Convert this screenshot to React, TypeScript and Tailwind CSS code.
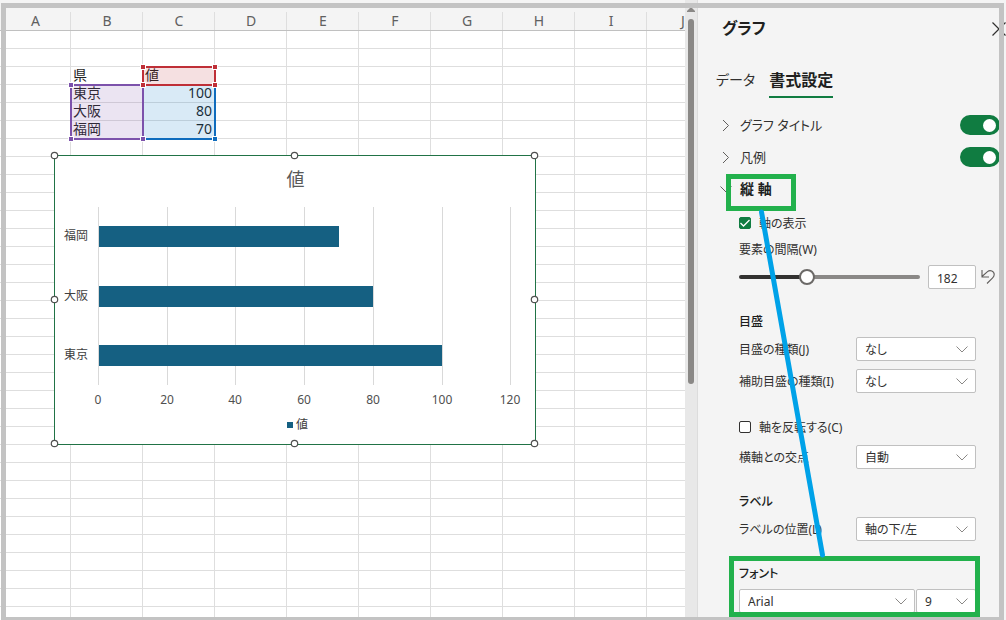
import { useState, type ReactNode } from 'react';

const COLUMNS = ['A', 'B', 'C', 'D', 'E', 'F', 'G', 'H', 'I', 'J'];
const ROWS = Array.from({ length: 34 }, (_, i) => i + 1);
const CELLS: Record<string, string> = {
  B3: '県',
  C3: '値',
  B4: '東京',
  C4: '100',
  B5: '大阪',
  C5: '80',
  B6: '福岡',
  C6: '70',
};

const BARS = [
  { label: '福岡', y: 226, end: 339 },
  { label: '大阪', y: 286, end: 373 },
  { label: '東京', y: 345, end: 442 },
];
const TICKS = [
  { value: 0, x: 98 },
  { value: 20, x: 167 },
  { value: 40, x: 235 },
  { value: 60, x: 304 },
  { value: 80, x: 373 },
  { value: 100, x: 442 },
  { value: 120, x: 510 },
];
const HANDLES = [
  [54.5, 155.5], [294.5, 155.5], [534.5, 155.5],
  [54.5, 299.5], [534.5, 299.5],
  [54.5, 443.5], [294.5, 443.5], [534.5, 443.5],
];

function RangeBox({ place, line, handle }: { place: string; line: string; handle: string }) {
  const corners = ['-left-1 -top-1', '-right-1 -top-1', '-left-1 -bottom-1', '-right-1 -bottom-1'];
  return (
    <div className={`pointer-events-none absolute border-2 ${place} ${line}`}>
      {corners.map((c) => (
        <span key={c} className={`absolute size-[6px] border border-white ${c} ${handle}`} />
      ))}
    </div>
  );
}

function Chart() {
  return (
    <svg
      className="absolute left-12 top-[149px] h-[302px] w-[494px]"
      viewBox="48 149 494 302"
      role="img"
      aria-label="値"
    >
      <rect x="54.5" y="155.5" width="481" height="289" fill="#fff" stroke="#217346" />
      <text x="295.5" y="186" textAnchor="middle" fontSize="18" fill="#595959">値</text>
      {TICKS.map((t) => (
        <g key={t.value}>
          <rect x={t.x} y="207" width="1" height="178" fill="#d9d9d9" />
          <text x={t.x} y="404" textAnchor="middle" fontSize="12" fill="#505050">{t.value}</text>
        </g>
      ))}
      {BARS.map((b) => (
        <g key={b.label}>
          <rect x="99" y={b.y} width={b.end - 99} height="21" fill="#156082" />
          <text x="88" y={b.y + 14} textAnchor="end" fontSize="12" fill="#404040">{b.label}</text>
        </g>
      ))}
      <rect x="287" y="422" width="6" height="6" fill="#156082" />
      <text x="296" y="429" fontSize="12" fill="#404040">値</text>
      {HANDLES.map(([x, y]) => (
        <circle key={`${x}-${y}`} cx={x} cy={y} r="3.2" fill="#fff" stroke="#505050" strokeWidth="1.2" />
      ))}
    </svg>
  );
}

function Sheet() {
  return (
    <main className="relative min-w-0 flex-1 overflow-hidden bg-white">
      <table className="w-[719px] table-fixed border-separate border-spacing-0 text-sm text-[#1f1f1f]">
        <colgroup>
          {COLUMNS.map((c) => (
            <col key={c} className={c === 'A' ? 'w-[71px]' : 'w-[72px]'} />
          ))}
        </colgroup>
        <thead>
          <tr>
            {COLUMNS.map((c) => (
              <th key={c} className="border-b border-[#c0c0c0] bg-[#f4f4f4] p-0 pt-3 font-normal text-[#606060]">
                <div className="h-[18px] border-r border-[#dedede] pl-px leading-[18px]">{c}</div>
              </th>
            ))}
          </tr>
        </thead>
        <tbody>
          {ROWS.map((r) => (
            <tr key={r}>
              {COLUMNS.map((c) => {
                const text = CELLS[c + r];
                const numeric = text !== undefined && /^\d+$/.test(text);
                return (
                  <td
                    key={c}
                    className={`h-[18px] border-r border-b border-[#dedede] px-[2px] py-0 align-top leading-[15px] ${numeric ? 'text-right' : 'text-left'}`}
                  >
                    {text}
                  </td>
                );
              })}
            </tr>
          ))}
        </tbody>
      </table>
      <RangeBox place="left-[142px] top-[84px] h-14 w-[74px]" line="border-[#0f6cbd] bg-[#0070c0]/15" handle="bg-[#0f6cbd]" />
      <RangeBox place="left-[70px] top-[84px] h-14 w-[74px]" line="border-[#7c52ab] bg-[#8055af]/16" handle="bg-[#7c52ab]" />
      <RangeBox place="left-[142px] top-[66px] h-5 w-[74px]" line="border-[#bf2f37] bg-[#bf2c33]/15" handle="bg-[#bf2f37]" />
      <Chart />
    </main>
  );
}

function Scrollbar() {
  return (
    <div className="flex w-3 shrink-0 flex-col items-center bg-[#e8e8e8] pt-2">
      <svg className="h-1 w-2" viewBox="0 0 8 4" aria-hidden="true">
        <path d="M0 4V3L3 0H5L8 3V4Z" fill="#8a8886" />
      </svg>
      <div className="mt-[7px] h-[365px] w-[6px] rounded-full bg-[#8a8886]" />
    </div>
  );
}

function Chevron({ className }: { className: string }) {
  return (
    <svg className={`h-[7px] w-3 ${className}`} viewBox="0 0 12 7" fill="none" stroke="currentColor" aria-hidden="true">
      <path d="M0.5 0.5L6 6L11.5 0.5" />
    </svg>
  );
}

function Section({ title, toggle }: { title: string; toggle?: boolean }) {
  return (
    <div className="flex h-8 items-center justify-between pl-[22px] pr-[6px]">
      <button type="button" aria-expanded={!toggle} className={`flex items-center leading-5 ${toggle ? 'text-[13px] text-[#323130]' : 'text-sm font-semibold text-[#201f1e]'}`}>
        <Chevron className={`mr-2 text-[#605e5c] ${toggle ? '-rotate-90' : ''}`} />
        {title}
      </button>
      {toggle && (
        <input
          type="checkbox"
          role="switch"
          aria-label={title}
          defaultChecked
          className="flex h-5 w-10 appearance-none items-center justify-start rounded-full bg-[#8a8886] px-1 before:size-[13px] before:rounded-full before:bg-white checked:justify-end checked:bg-[#107c41]"
        />
      )}
    </div>
  );
}

function Check({ label, checked, className }: { label: string; checked?: boolean; className: string }) {
  return (
    <label className={`flex h-[18px] items-center gap-2 ${className}`}>
      <span className="relative flex size-3">
        <input
          type="checkbox"
          defaultChecked={checked}
          className="peer size-3 appearance-none rounded-xs border border-[#323130] bg-white checked:border-[#107c41] checked:bg-[#107c41]"
        />
        <svg className="pointer-events-none absolute inset-0 hidden size-3 peer-checked:block" viewBox="0 0 12 12" fill="none" stroke="#fff" strokeWidth="1.3" aria-hidden="true">
          <path d="M1.5 6L4.5 9L10.5 3" />
        </svg>
      </span>
      <span className="pt-[2px]">{label}</span>
    </label>
  );
}

function Select({ id, label, value, className }: { id: string; label?: string; value: string; className: string }) {
  return (
    <div className={`relative h-6 ${className}`}>
      <select id={id} aria-label={label} className="h-6 w-full appearance-none rounded-xs border border-[#c0c0c0] bg-white px-2 pt-[2px] leading-5">
        <option>{value}</option>
      </select>
      <Chevron className="pointer-events-none absolute right-2 top-[9px] text-[#8a8886]" />
    </div>
  );
}

function Field({ id, label, value, className }: { id: string; label: string; value: string; className: string }) {
  return (
    <div className={`flex items-center justify-between ${className}`}>
      <label htmlFor={id} className="pt-[2px]">{label}</label>
      <Select id={id} value={value} className="w-[120px]" />
    </div>
  );
}

function Heading({ children }: { children: ReactNode }) {
  return <h3 className="mt-6 mb-[6px] leading-[18px] font-medium text-[#201f1e]">{children}</h3>;
}

function Panel() {
  const [gap, setGap] = useState(182);
  return (
    <aside className="relative w-[309px] shrink-0 border-l border-[#dcdcdc] bg-[#f4f4f4] pt-[18px] text-[#323130] [font-feature-settings:'palt']">
      <header className="flex h-5 items-center justify-between pl-6">
        <h2 className="text-base leading-5 font-bold text-[#201f1e]">グラフ</h2>
        <button type="button" aria-label="閉じる" className="pt-[2px]">
          <svg className="size-[14px]" viewBox="0 0 14 14" stroke="#323130" strokeWidth="1.2" aria-hidden="true">
            <path d="M0.5 0.5L13.5 13.5M13.5 0.5L0.5 13.5" />
          </svg>
        </button>
      </header>
      <nav className="mt-8 flex gap-[14px] pl-[18px] leading-5">
        <button type="button" className="border-b-2 border-transparent pb-[6px] text-sm leading-5">データ</button>
        <button type="button" className="border-b-2 border-[#107c41] pb-[6px] text-base leading-5 font-semibold text-[#201f1e]">書式設定</button>
      </nav>
      <div className="mt-[11px]">
        <Section title="グラフ タイトル" toggle />
        <Section title="凡例" toggle />
        <Section title="縦 軸" />
      </div>
      <div className="pl-[41px] pr-[30px] text-xs leading-[18px]">
        <Check label="軸の表示" checked className="mt-[9px]" />
        <label htmlFor="gap" className="mt-[9px] block">要素の間隔(W)</label>
        <div className="-mr-5 mt-[6px] flex h-6 items-center">
          <input
            id="gap"
            type="range"
            min={0}
            max={500}
            value={gap}
            onChange={(e) => setGap(Number(e.target.value))}
            style={{ backgroundImage: `linear-gradient(to right, #323130 ${gap / 5}%, #8a8886 ${gap / 5}%)` }}
            className="h-1 min-w-0 flex-1 appearance-none rounded-full [&::-webkit-slider-thumb]:size-4 [&::-webkit-slider-thumb]:appearance-none [&::-webkit-slider-thumb]:rounded-full [&::-webkit-slider-thumb]:border-2 [&::-webkit-slider-thumb]:border-[#6b6967] [&::-webkit-slider-thumb]:bg-white"
          />
          <input
            type="text"
            aria-label="要素の間隔の値"
            value={gap}
            onChange={(e) => setGap(Number(e.target.value) || 0)}
            className="ml-2 h-6 w-12 rounded-xs border border-[#c0c0c0] bg-white px-2 pt-[2px]"
          />
          <button type="button" aria-label="元に戻す" className="ml-1">
            <svg className="size-4" viewBox="0 0 16 16" fill="none" stroke="#605e5c" strokeWidth="1.1" aria-hidden="true">
              <path d="M2 1V8H9M2 7.5L7.5 2.6C10 0.6 14.4 2 14.2 5.8C14.1 7.2 13.4 8.2 12.4 9.2L7 14.5" />
            </svg>
          </button>
        </div>
        <Heading>目盛</Heading>
        <Field id="major" label="目盛の種類(J)" value="なし" className="" />
        <Field id="minor" label="補助目盛の種類(I)" value="なし" className="mt-2" />
        <Check label="軸を反転する(C)" className="mt-[25px]" />
        <Field id="cross" label="横軸との交点" value="自動" className="mt-[9px]" />
        <Heading>ラベル</Heading>
        <Field id="position" label="ラベルの位置(L)" value="軸の下/左" className="" />
        <Heading>フォント</Heading>
        <div className="flex gap-px">
          <Select id="font" label="フォント" value="Arial" className="min-w-0 flex-1" />
          <Select id="size" label="フォント サイズ" value="9" className="w-[60px]" />
        </div>
      </div>
      <div className="pointer-events-none absolute left-7 top-[174px] z-20 h-[37px] w-[70px] border-5 border-[#22b14c]" />
      <div className="pointer-events-none absolute left-[31px] top-[556px] z-20 h-[61px] w-[251px] border-5 border-[#22b14c]" />
      <svg className="pointer-events-none absolute left-[58px] top-[206px] z-20 h-[354px] w-[74px]" viewBox="0 0 74 354" aria-hidden="true">
        <path d="M5.5 6L66.5 349" stroke="#00a2e8" strokeWidth="5" strokeLinecap="round" />
      </svg>
    </aside>
  );
}

export default function App() {
  return (
    <div
      lang="ja"
      className="relative flex h-screen overflow-hidden bg-[#f4f4f4] font-['Noto_Sans','Noto_Sans_CJK_JP',sans-serif]"
    >
      <Sheet />
      <Scrollbar />
      <Panel />
      <div className="pointer-events-none absolute -bottom-[2px] left-px right-[2px] top-[3px] z-10 border-5 border-[#c3c3c3]" />
    </div>
  );
}
